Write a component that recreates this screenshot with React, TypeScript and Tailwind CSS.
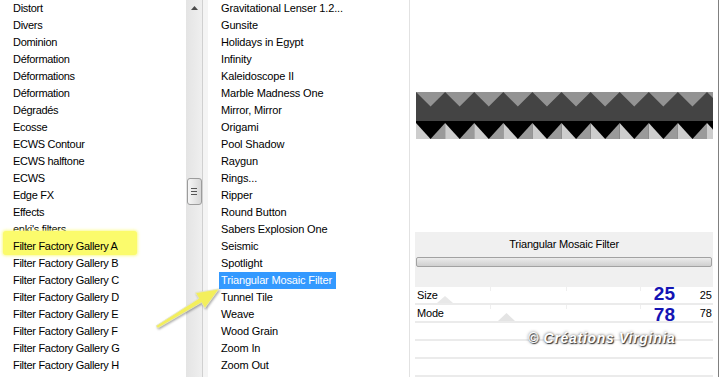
import React from "react";

const leftItems = [
  "Distort",
  "Divers",
  "Dominion",
  "Déformation",
  "Déformations",
  "Déformation",
  "Dégradés",
  "Ecosse",
  "ECWS Contour",
  "ECWS halftone",
  "ECWS",
  "Edge FX",
  "Effects",
  "enki's filters",
  "Filter Factory Gallery A",
  "Filter Factory Gallery B",
  "Filter Factory Gallery C",
  "Filter Factory Gallery D",
  "Filter Factory Gallery E",
  "Filter Factory Gallery F",
  "Filter Factory Gallery G",
  "Filter Factory Gallery H",
];

const midItems = [
  "Gravitational Lenser 1.2...",
  "Gunsite",
  "Holidays in Egypt",
  "Infinity",
  "Kaleidoscope II",
  "Marble Madness One",
  "Mirror, Mirror",
  "Origami",
  "Pool Shadow",
  "Raygun",
  "Rings...",
  "Ripper",
  "Round Button",
  "Sabers Explosion One",
  "Seismic",
  "Spotlight",
  "Triangular Mosaic Filter",
  "Tunnel Tile",
  "Weave",
  "Wood Grain",
  "Zoom In",
  "Zoom Out",
];

function Pattern() {
  const W = 297;
  const P = 29.1;
  const n = Math.ceil(W / P) + 1;
  let top = "0,0 ";
  for (let i = 0; i < n; i++) {
    const x = i * P;
    top += `${x},0 ${x + P / 2},14.5 `;
  }
  top += `${n * P},0 ${n * P},29 0,29`;
  const pyr: React.ReactNode[] = [];
  for (let i = 0; i < n; i++) {
    const x = i * P;
    pyr.push(
      <polygon key={"l" + i} points={`${x - P / 2},47 ${x},31 ${x},47`} fill="#9a9a9a" />,
      <polygon key={"r" + i} points={`${x},31 ${x + P / 2},47 ${x},47`} fill="#cdcdcd" />
    );
  }
  return (
    <svg width={W} height={47} viewBox={`0 0 ${W} 47`} className="block">
      <rect x={0} y={0} width={W} height={29} fill="#939393" />
      <polygon points={top} fill="#444444" />
      <rect x={0} y={29} width={W} height={18} fill="#000000" />
      {pyr}
    </svg>
  );
}

function Arrow() {
  return (
    <svg
      width={80}
      height={55}
      viewBox="0 0 80 55"
      className="absolute left-[150px] top-[282px] [filter:drop-shadow(1px_1px_1px_rgba(0,0,0,0.35))]"
    >
      <polygon
        points="69,7 54.9,26.2 51.5,20.6 7.8,46.2 6.2,43.8 48.9,16.4 45.5,10.8"
        fill="#f3ef5c"
        stroke="#e6e6c8"
        strokeWidth={0.8}
        strokeLinejoin="round"
      />
    </svg>
  );
}

export default function App() {
  return (
    <div
      className="relative flex w-[719px] h-[377px] overflow-hidden bg-white text-black"
      style={{ fontFamily: '"Liberation Sans", Arial, sans-serif' }}
    >
      {/* Left list */}
      <div className="w-[186px] flex flex-col">
        {leftItems.map((t, i) => (
          <div key={i} className="relative h-[17px] shrink-0 pl-[13px] flex items-center">
            {i === 14 && (
              <div className="absolute left-[3px] top-[-7px] w-[134px] h-[24px] rounded-[3px] bg-[#fbfb6c] shadow-[0_0_3px_1px_rgba(250,250,120,0.8)]" />
            )}
            <span className="relative text-[11px] tracking-[-0.3px] leading-[17px] whitespace-nowrap">{t}</span>
          </div>
        ))}
      </div>

      {/* Left scrollbar */}
      <div className="w-[16px] flex flex-col items-center bg-gradient-to-r from-[#e4e4e4] to-[#efefef]">
        <svg width={7} height={4} viewBox="0 0 7 4" className="mt-[6px]">
          <polygon points="3.5,0 7,4 0,4" fill="#4a4a4a" />
        </svg>
        <div className="mt-[168px] w-[15px] h-[27px] rounded-[3px] border border-[#9c9c9c] bg-gradient-to-r from-[#f6f6f6] to-[#d8d8d8] flex flex-col items-center justify-center gap-[2px]">
          <div className="w-[6px] h-px bg-[#555]" />
          <div className="w-[6px] h-px bg-[#555]" />
          <div className="w-[6px] h-px bg-[#555]" />
        </div>
      </div>
      <div className="w-px bg-[#d0d0d0]" />
      <div className="w-[5px] bg-[#f4f4f4]" />

      {/* Middle list */}
      <div className="w-[201px] flex flex-col">
        {midItems.map((t, i) => (
          <div key={i} className="h-[17px] shrink-0 pl-[11px] flex items-center">
            <span
              className={
                i === 16
                  ? "pl-[2px] pr-[4px] h-[17px] bg-[#3399ff] text-white text-[11px] tracking-[-0.15px] leading-[17px] whitespace-nowrap"
                  : "px-[2px] text-[11px] tracking-[-0.15px] leading-[17px] whitespace-nowrap"
              }
            >
              {t}
            </span>
          </div>
        ))}
      </div>

      {/* Right panel */}
      <div className="w-[310px] border-l border-l-[#e2e2e2] border-r border-r-[#808080] flex flex-col px-[5px]">
        <div className="mt-[92px] ml-px">
          <Pattern />
        </div>
        <div className="mt-[93px] h-[55px] bg-[#f0f0f0] flex flex-col">
          <div className="pt-[5px] h-[19px] text-center text-[11px] tracking-[-0.2px] leading-[14px]">
            Triangular Mosaic Filter
          </div>
          <div className="mt-[6px] mx-px h-[10px] rounded-[2px] border border-[#a2a2a2] bg-gradient-to-b from-[#ececec] to-[#cfcfcf]" />
        </div>

        {/* Parameter rows */}
        <div className="flex flex-col">
          <div className="relative h-[18px] border-b-2 border-[#ebebeb] flex items-start">
            <div className="absolute left-[75px] top-0 w-px h-[4px] bg-[#efefef]" />
            <div className="absolute left-[151px] top-0 w-px h-[4px] bg-[#efefef]" />
            <div className="absolute left-[225px] top-0 w-px h-[4px] bg-[#efefef]" />
            <svg width={16} height={7} viewBox="0 0 16 7" className="absolute left-[22px] bottom-0">
              <polygon points="8,0 16,7 0,7" fill="#e8e8e8" />
            </svg>
            <span className="relative pl-[2px] flex-1 text-[11px] leading-[16px] tracking-[-0.2px]">Size</span>
            <span className="relative mt-[-1px] text-[19px] font-bold leading-[16px] text-[#1414b4]">25</span>
            <span className="relative w-[38px] pr-[1px] text-right text-[11px] leading-[16px]">25</span>
          </div>
          <div className="relative h-[18px] border-b-2 border-[#ebebeb] flex items-start">
            <div className="absolute left-[75px] top-0 w-px h-[4px] bg-[#efefef]" />
            <div className="absolute left-[151px] top-0 w-px h-[4px] bg-[#efefef]" />
            <div className="absolute left-[225px] top-0 w-px h-[4px] bg-[#efefef]" />
            <svg width={17} height={8} viewBox="0 0 17 8" className="absolute left-[83px] bottom-0">
              <polygon points="8.5,0 17,8 0,8" fill="#e4e4e4" />
            </svg>
            <span className="relative pl-[2px] flex-1 text-[11px] leading-[16px] tracking-[-0.2px]">Mode</span>
            <span className="relative mt-[2px] text-[19px] font-bold leading-[16px] text-[#1414b4]">78</span>
            <span className="relative w-[38px] pr-[1px] text-right text-[11px] leading-[16px]">78</span>
          </div>
          <div className="h-[18px] border-b-2 border-[#ebebeb]" />
          <div className="h-[18px] border-b-2 border-[#ebebeb]" />
          <div className="h-[18px] border-b-2 border-[#ebebeb]" />
        </div>
      </div>

      {/* Watermark */}
      <div className="absolute left-[528px] top-[329px] text-[14px] leading-[18px] font-bold italic tracking-[0.7px] text-white whitespace-nowrap [text-shadow:1px_1px_1px_#333,0_0_3px_#555]">
        © Créations Virginia
      </div>

      <Arrow />
    </div>
  );
}
